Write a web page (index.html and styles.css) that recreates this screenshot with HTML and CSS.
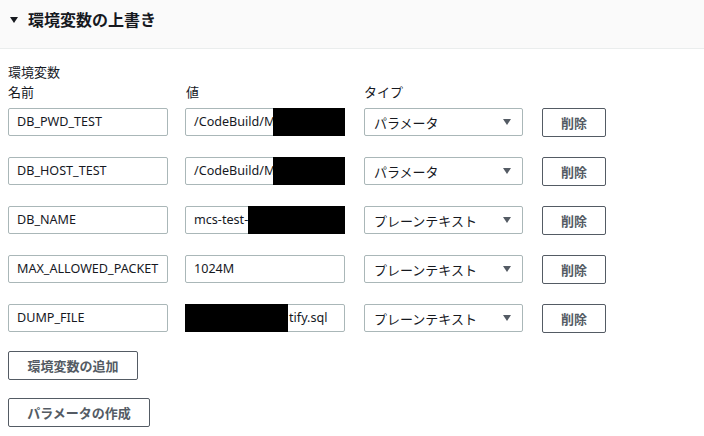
FILE: index.html
```html
<!DOCTYPE html>
<html lang="ja">
<head>
<meta charset="utf-8">
<link rel="stylesheet" href="styles.css">
</head>
<body>
<div class="header">
  <span class="caret"></span>
  <h2 class="title">環境変数の上書き</h2>
</div>
<div class="content">
  <div class="group-label">環境変数</div>
  <div class="row head">
    <div class="c-name">名前</div>
    <div class="c-value">値</div>
    <div class="c-type">タイプ</div>
  </div>

  <div class="row">
    <div class="field c-name">DB_PWD_TEST</div>
    <div class="field c-value">/CodeBuild/M<span class="redact r1"></span></div>
    <div class="select c-type"><span>パラメータ</span><span class="arrow"></span></div>
    <button class="btn del">削除</button>
  </div>
  <div class="row">
    <div class="field c-name">DB_HOST_TEST</div>
    <div class="field c-value">/CodeBuild/M<span class="redact r1"></span></div>
    <div class="select c-type"><span>パラメータ</span><span class="arrow"></span></div>
    <button class="btn del">削除</button>
  </div>
  <div class="row">
    <div class="field c-name">DB_NAME</div>
    <div class="field c-value">mcs-test-<span class="redact r3"></span></div>
    <div class="select c-type"><span>プレーンテキスト</span><span class="arrow"></span></div>
    <button class="btn del">削除</button>
  </div>
  <div class="row">
    <div class="field c-name">MAX_ALLOWED_PACKET</div>
    <div class="field c-value">1024M</div>
    <div class="select c-type"><span>プレーンテキスト</span><span class="arrow"></span></div>
    <button class="btn del">削除</button>
  </div>
  <div class="row">
    <div class="field c-name">DUMP_FILE</div>
    <div class="field c-value tail"><span class="redact r5"></span>tify.sql</div>
    <div class="select c-type"><span>プレーンテキスト</span><span class="arrow"></span></div>
    <button class="btn del">削除</button>
  </div>

  <div class="actions">
    <button class="btn add">環境変数の追加</button>
    <button class="btn param">パラメータの作成</button>
  </div>
</div>
</body>
</html>
```

FILE: styles.css
```css
* { box-sizing: border-box; }
body {
  margin: 0;
  background: #ffffff;
  color: #16191f;
  font-family: "Noto Sans", "Noto Sans CJK JP", sans-serif;
  font-size: 13px;
}
.header {
  height: 49px;
  background: #fafafa;
  border-bottom: 1px solid #eaeded;
  display: flex;
  align-items: center;
  padding: 0 0 10px 10px;
}
.caret {
  width: 0;
  height: 0;
  border-left: 4px solid transparent;
  border-right: 4px solid transparent;
  border-top: 6px solid #16191f;
  margin-right: 10px;
  margin-top: 1px;
}
.title {
  margin: 0;
  font-size: 16px;
  font-weight: 700;
  line-height: 22px;
  font-family: "Noto Sans CJK JP", sans-serif;
}
.content {
  padding: 14px 0 0 8px;
}
.group-label {
  line-height: 18px;
  height: 19px;
  font-family: "Noto Sans CJK JP", sans-serif;
}
.row {
  display: flex;
  align-items: center;
  height: 28px;
  margin-bottom: 21px;
}
.row.head {
  height: 19px;
  margin-bottom: 7px;
  line-height: 19px;
  font-family: "Noto Sans CJK JP", sans-serif;
}
.c-name { width: 160px; margin-right: 17px; flex: none; }
.c-value { width: 160px; margin-right: 19px; flex: none; }
.c-type { width: 159px; margin-right: 19px; flex: none; }
.row.head .c-value { padding-left: 1px; }
.field {
  position: relative;
  height: 28px;
  border: 1px solid #aab7b8;
  border-radius: 2px;
  padding: 0 8px;
  line-height: 26px;
  font-size: 12.6px;
  white-space: nowrap;
  overflow: visible;
}
.field.tail { padding-left: 103px; }
.redact {
  position: absolute;
  top: -1px;
  bottom: -1px;
  right: -1px;
  background: #000;
}
.r1 { left: 87px; }
.r3 { left: 62px; }
.r5 { left: -1px; right: auto; width: 103px; }
.select {
  height: 28px;
  border: 1px solid #aab7b8;
  border-radius: 2px;
  display: flex;
  align-items: center;
  justify-content: space-between;
  padding: 0 11px 0 9px;
  font-family: "Noto Sans CJK JP", sans-serif;
}
.arrow {
  width: 0;
  height: 0;
  border-left: 4px solid transparent;
  border-right: 4px solid transparent;
  border-top: 6px solid #545b64;
}
.btn {
  font-family: "Noto Sans CJK JP", sans-serif;
  font-size: 13px;
  font-weight: 700;
  color: #545b64;
  background: #fff;
  border: 1px solid #545b64;
  border-radius: 2px;
  height: 29px;
  padding: 0;
  cursor: pointer;
}
.btn.del { width: 64px; height: 29px; }
.actions {
  display: flex;
  flex-direction: column;
  align-items: flex-start;
  gap: 18px;
  margin-top: -2px;
}
.btn.add { width: 130px; }
.btn.param { width: 142px; }
```
